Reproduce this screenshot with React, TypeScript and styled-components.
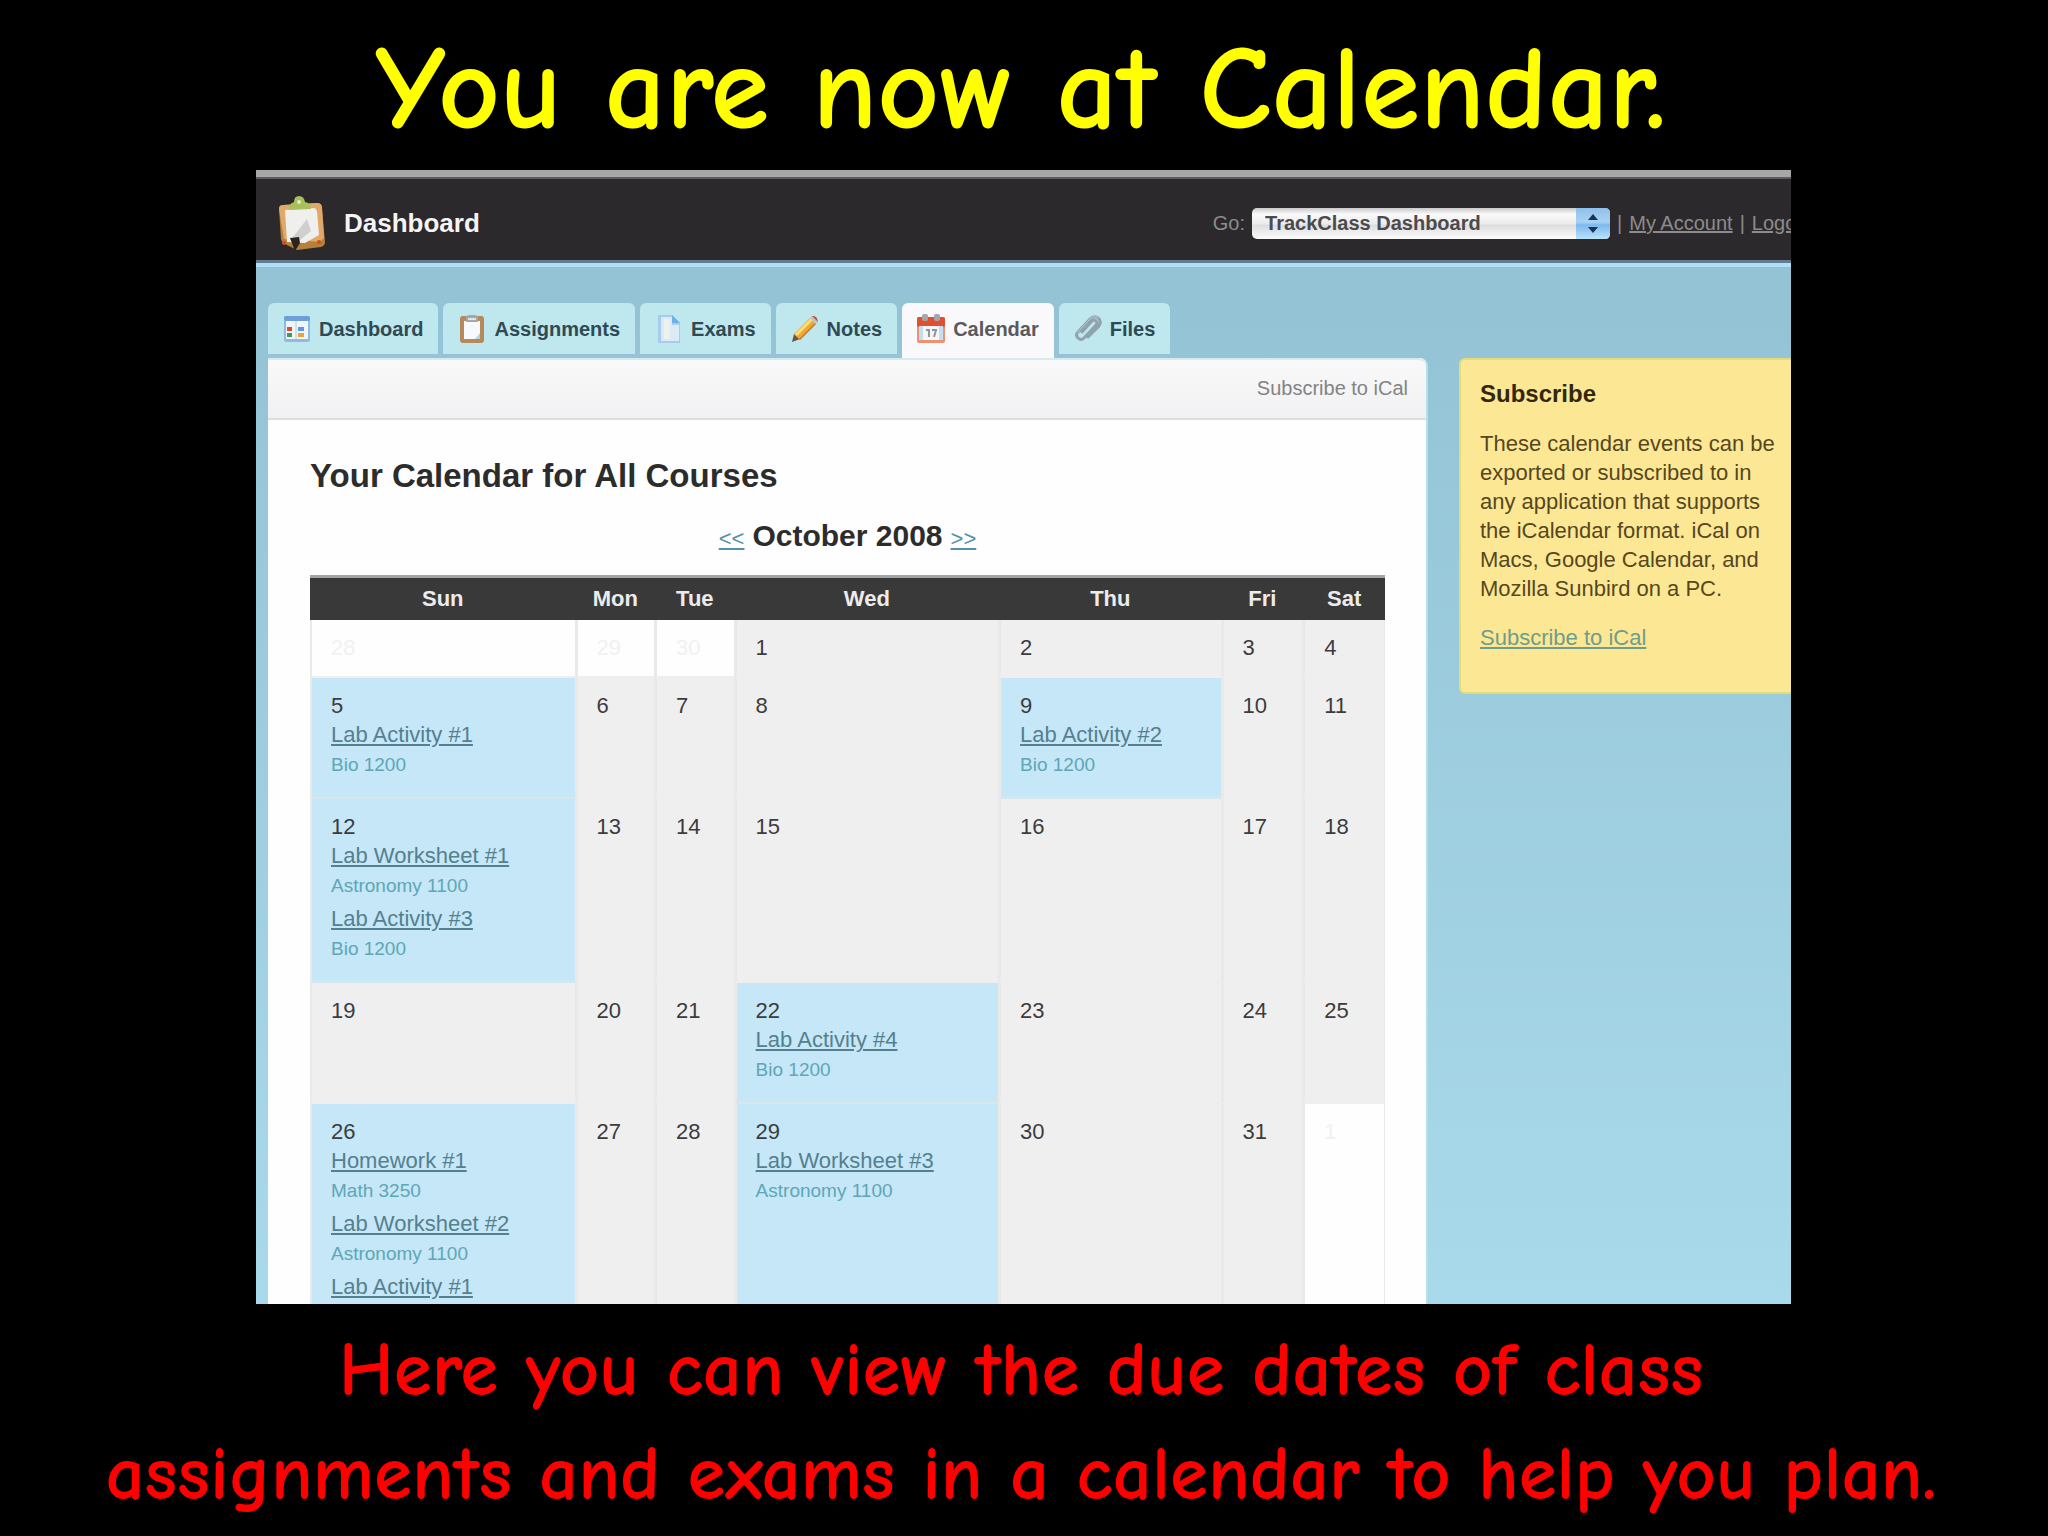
import React from "react";
import styled, { createGlobalStyle, css } from "styled-components";

const sans = `"Liberation Sans", Arial, Helvetica, sans-serif`;
const comic = `"Comic Sans MS", "Comic Neue", "Noto Sans", sans-serif`;

const GlobalStyle = createGlobalStyle`
  * { box-sizing: border-box; }
  body { margin: 0; background: #000; font-family: ${sans}; }
`;

const Slide = styled.main`
  display: flex;
  flex-direction: column;
  height: 100vh;
  background: #000;
`;

const SlideTitle = styled.h1`
  flex: none;
  height: 170px;
  margin: 0;
  padding: 4px 6px 0 0;
  text-align: center;
  color: #ffff00;
  font: 700 120px/170px ${comic};
  white-space: nowrap;
`;

const Caption = styled.p`
  flex: none;
  height: 232px;
  margin: 0;
  padding: 14px 6px 0 0;
  text-align: center;
  color: #ff0000;
  font: 700 77px/104px ${comic};
  white-space: nowrap;
`;

const CaptionLine = styled.span`
  display: block;
`;

const Shot = styled.section`
  flex: 1;
  min-height: 0;
  margin: 0 257px 0 256px;
  overflow: hidden;
  display: flex;
  flex-direction: column;
  background: linear-gradient(#93c3d5 12%, #a9daeb 100%);
`;

const TopBar = styled.header`
  flex: none;
  display: flex;
  align-items: center;
  height: 97px;
  padding: 6px 0 0 20px;
  background: #2b292b;
  border-top: 7px solid #a8a6a8;
  border-bottom: 4px solid #b0dff6;
  box-shadow: inset 0 2px #5c5a5c, inset 0 -3px #627d92;
`;

const Brand = styled.h2`
  flex: 1;
  display: flex;
  align-items: center;
  gap: 18px;
  margin: 0;
  color: #f4f4f4;
  font: 700 26px/32px ${sans};
`;

const Account = styled.nav`
  display: flex;
  align-items: center;
  gap: 7px;
  margin-right: -22px;
  color: #8d8b8d;
  font-size: 20px;
  line-height: 32px;
`;

const AccountLink = styled.a`
  color: inherit;
  text-decoration: underline;
`;

const SelectBox = styled.span`
  position: relative;
  display: block;
  width: 358px;
`;

const CourseSelect = styled.select`
  appearance: none;
  display: block;
  width: 100%;
  height: 31px;
  padding: 0 40px 0 13px;
  border: 0;
  border-radius: 5px;
  color: #4c4a4c;
  background: linear-gradient(#c9c9cb, #fafafa 20%, #ececec 50%, #dedee0 56%, #fcfcfc 100%);
  font: 700 20px/31px ${sans};
`;

const SelectCap = styled.svg`
  position: absolute;
  top: 0;
  right: 0;
  pointer-events: none;
`;

const Tabs = styled.nav`
  flex: none;
  display: flex;
  gap: 5px;
  height: 91px;
  padding: 36px 12px 0;
`;

const Tab = styled.a<{ $active?: boolean }>`
  display: flex;
  align-items: center;
  gap: 8px;
  height: 51px;
  padding: 0 15px;
  border-radius: 6px 6px 0 0;
  background: #bfe7ee;
  color: #2f4a52;
  font: 700 20px/24px ${sans};
  text-decoration: none;
  ${(p) =>
    p.$active &&
    css`
      height: 55px;
      padding-bottom: 4px;
      background: #f9f8fa;
      color: #5a5a5e;
    `}
`;

const Columns = styled.div`
  flex: 1;
  min-height: 0;
  display: flex;
  align-items: flex-start;
  padding-left: 12px;
`;

const Panel = styled.section`
  flex: 1;
  min-width: 0;
  background: #fefefe;
  border-right: 2px solid #b6e0e8;
  border-radius: 0 8px 0 0;
`;

const PanelBar = styled.div`
  display: flex;
  justify-content: flex-end;
  height: 62px;
  padding: 13px 18px;
  background: linear-gradient(#f9f9fa, #f1f0f2);
  border-top: 2px solid #d6ebf0;
  border-bottom: 2px solid #dededf;
  border-radius: 0 8px 0 0;
`;

const BarLink = styled.a`
  color: #838385;
  font-size: 20px;
  line-height: 30px;
  text-decoration: none;
`;

const PanelBody = styled.div`
  padding: 36px 41px 0 42px;
`;

const PageHeading = styled.h3`
  margin: 0;
  color: #2c2c2c;
  font: 700 33px/40px ${sans};
`;

const MonthRow = styled.div`
  display: flex;
  justify-content: center;
  align-items: baseline;
  gap: 8px;
  padding: 20px 0 16px;
  line-height: 40px;
`;

const MonthName = styled.h4`
  margin: 0;
  color: #2c2c2c;
  font: 700 30px/40px ${sans};
`;

const MonthLink = styled.a`
  color: #5590a8;
  font-size: 22px;
`;

const Grid = styled.table`
  width: 100%;
  table-layout: fixed;
  border-collapse: separate;
  border-spacing: 0;
  border-top: 3px solid #a4a4a4;
`;

const DayCol = styled.col<{ $share: string }>`
  width: ${(p) => p.$share};
`;

const DayHead = styled.th`
  height: 42px;
  padding: 0;
  background: #3a393a;
  color: #ececec;
  font: 700 22px/42px ${sans};
`;

type Kind = "plain" | "due" | "out";
const fills = { plain: "#f0eff0", due: "#c5e7f7", out: "#fefefe" };

const Day = styled.td<{ $kind: Kind }>`
  padding: 13px 0 14px 19px;
  vertical-align: top;
  background: ${(p) => fills[p.$kind]};
  border-left: 2px solid #e9e9ea;
  border-right: 1px solid #e9e9ea;
  border-bottom: 2px solid ${(p) => (p.$kind === "due" ? "#d9e6ec" : "#efeeef")};
  color: ${(p) => (p.$kind === "out" ? "#f1f1f1" : "#3c3c3e")};
`;

const DayNumber = styled.div`
  font-size: 22px;
  line-height: 29px;
`;

const Due = styled.div`
  margin-bottom: 3px;
`;

const DueLink = styled.a`
  display: block;
  color: #54808f;
  font-size: 22px;
  line-height: 30px;
  text-decoration: underline;
  white-space: nowrap;
`;

const Course = styled.div`
  color: #5fa6b6;
  font-size: 19px;
  line-height: 30px;
`;

const Note = styled.aside`
  flex: 0 0 350px;
  margin: 0 -18px 0 31px;
  height: 336px;
  padding: 19px 19px 0;
  background: #fce794;
  border: 2px solid #e2dc7c;
  border-radius: 6px;
  color: #56471f;
  font-size: 22px;
  line-height: 29px;
`;

const NoteHeading = styled.h3`
  margin: 0 0 20px;
  color: #33260f;
  font: 700 24px/30px ${sans};
`;

const NoteText = styled.p`
  margin: 0 0 20px;
`;

const NoteLink = styled.a`
  color: #6f9d8c;
  text-decoration: underline;
`;

const LogoIcon = () => (
  <svg width="50" height="56" viewBox="0 0 50 56" aria-hidden="true">
    <path d="M3 14q0-4 4-4l34-2q5 0 5 5l3 34q0 4-4 5l-24 3-12-6q-3-1-4-5z" fill="#b5813a" />
    <path d="M3 14q0-4 4-4l34-2q5 0 5 5l2 30-4 4L8 44z" fill="#e0a96a" />
    <path d="M9 15l29-2q2 0 3 3l2 24-14 8-18-1z" fill="#efefee" />
    <path d="M31 24l-14 18 6 4 12-10z" fill="#cfcfcf" />
    <path d="M13 15q-1-6 5-8 0-6 5-6t6 6q6 1 6 7z" fill="#a9bf5c" />
    <circle cx="23" cy="7" r="2" fill="#e3ecc0" />
    <path d="M14 43l9-1 1 6-5 8z" fill="#2a241c" />
    <circle cx="8" cy="48" r="2" fill="#d44a2c" />
    <circle cx="43" cy="47" r="2" fill="#d44a2c" />
  </svg>
);

const DashboardIcon = () => (
  <svg width="28" height="28" viewBox="0 0 28 28" aria-hidden="true">
    <rect x="1" y="1" width="26" height="26" rx="2" fill="#8fbbe3" />
    <rect x="1" y="1" width="26" height="5" rx="2" fill="#6e9fd8" />
    <rect x="3" y="6" width="22" height="18" fill="#f0f5f8" />
    <path d="M13 6v18" stroke="#b7c9d8" />
    <rect x="4" y="12" width="5" height="4" fill="#dd4a34" />
    <rect x="4" y="18" width="5" height="4" fill="#3f9a52" />
    <rect x="15" y="12" width="6" height="4" fill="#5b98dc" />
    <rect x="15" y="18" width="6" height="4" fill="#eba13c" />
  </svg>
);

const AssignmentsIcon = () => (
  <svg width="28" height="30" viewBox="0 0 28 30" aria-hidden="true">
    <rect x="2" y="2" width="24" height="27" rx="3" fill="#b5895a" />
    <rect x="6" y="7" width="16" height="18" fill="#f6fafc" />
    <path d="M17 25l5-6v6z" fill="#b5d3e6" />
    <path d="M8 8V4q0-3 3-3h6q3 0 3 3v4z" fill="#a3a8aa" />
    <path d="M10 5h8" stroke="#dfe3e4" strokeWidth="2" />
  </svg>
);

const ExamsIcon = () => (
  <svg width="28" height="30" viewBox="0 0 28 30" aria-hidden="true">
    <path d="M3 1h14l8 8v20H3z" fill="#a6cdf0" />
    <path d="M6 3h11v8h7v16H6z" fill="#dbeaf5" />
    <path d="M9 5h6v20H9z" fill="#edf3ec" />
    <path d="M17 1l8 8h-8z" fill="#6faee6" />
  </svg>
);

const NotesIcon = () => (
  <svg width="28" height="28" viewBox="0 0 28 28" aria-hidden="true">
    <path d="M1 27l2-8 6 5z" fill="#6c5343" />
    <path d="M3 19L19 3l6 6L9 25z" fill="#f2a933" />
    <path d="M4 19L20 3l2 2L6 21z" fill="#fbe07a" />
    <path d="M8 24L24 8l1 1L9 25z" fill="#c67a26" />
    <path d="M19 3l2-2 6 6-2 2z" fill="#bfc4c6" />
    <path d="M21 1q5-1 6 6z" fill="#c9453b" />
  </svg>
);

const CalendarIcon = () => (
  <svg width="28" height="30" viewBox="0 0 28 30" aria-hidden="true">
    <rect x="0" y="3" width="28" height="26" rx="2" fill="#ef9072" />
    <rect x="0" y="3" width="28" height="10" rx="2" fill="#df5031" />
    <rect x="2" y="12" width="24" height="14" fill="#f3f7fa" />
    <path d="M2 12h4v14H2zM22 12h4v14h-4z" fill="#c3e0f2" />
    <path d="M9 16h3v7M15 16h4l-2 7" stroke="#8f959a" strokeWidth="2" fill="none" />
    <rect x="5" y="0" width="6" height="7" rx="2" fill="#a3a7aa" />
    <rect x="17" y="0" width="6" height="7" rx="2" fill="#a3a7aa" />
  </svg>
);

const FilesIcon = () => (
  <svg width="28" height="28" viewBox="0 0 28 28" fill="none" strokeLinecap="round" aria-hidden="true">
    <path
      d="M8 17L18 6q2-2 4 0t0 4L10 23q-3 3-6 0t0-6L16 4q4-4 8-1t1 8L14 22"
      stroke="#8fa3ac"
      strokeWidth="3"
    />
    <path d="M4 17L16 4q4-4 8-1" stroke="#bcc9cf" strokeWidth="1" />
  </svg>
);

const tabs = [
  { label: "Dashboard", Icon: DashboardIcon },
  { label: "Assignments", Icon: AssignmentsIcon },
  { label: "Exams", Icon: ExamsIcon },
  { label: "Notes", Icon: NotesIcon },
  { label: "Calendar", Icon: CalendarIcon, active: true },
  { label: "Files", Icon: FilesIcon },
];

const days = [
  { name: "Sun", share: "24.7%" },
  { name: "Mon", share: "7.4%" },
  { name: "Tue", share: "7.4%" },
  { name: "Wed", share: "24.6%" },
  { name: "Thu", share: "20.7%" },
  { name: "Fri", share: "7.6%" },
  { name: "Sat", share: "7.6%" },
];

const weeks: number[][] = [
  [28, 29, 30, 1, 2, 3, 4],
  [5, 6, 7, 8, 9, 10, 11],
  [12, 13, 14, 15, 16, 17, 18],
  [19, 20, 21, 22, 23, 24, 25],
  [26, 27, 28, 29, 30, 31, 1],
];

const due: Record<number, [string, string?][]> = {
  5: [["Lab Activity #1", "Bio 1200"]],
  9: [["Lab Activity #2", "Bio 1200"]],
  12: [
    ["Lab Worksheet #1", "Astronomy 1100"],
    ["Lab Activity #3", "Bio 1200"],
  ],
  22: [["Lab Activity #4", "Bio 1200"]],
  26: [
    ["Homework #1", "Math 3250"],
    ["Lab Worksheet #2", "Astronomy 1100"],
    ["Lab Activity #1"],
  ],
  29: [["Lab Worksheet #3", "Astronomy 1100"]],
};

const isOutside = (week: number, day: number) =>
  (week === 0 && day > 20) || (week === 4 && day < 10);

export default function App() {
  return (
    <Slide>
      <GlobalStyle />
      <SlideTitle>You are now at Calendar.</SlideTitle>
      <Shot>
        <TopBar>
          <Brand>
            <LogoIcon />
            Dashboard
          </Brand>
          <Account>
            <label htmlFor="go">Go:</label>
            <SelectBox>
              <CourseSelect id="go">
                <option>TrackClass Dashboard</option>
              </CourseSelect>
              <SelectCap width="34" height="31" viewBox="0 0 34 31" aria-hidden="true">
                <defs>
                  <linearGradient id="cap" x1="0" y1="0" x2="0" y2="1">
                    <stop offset="0" stopColor="#8fc0ea" />
                    <stop offset="0.45" stopColor="#a9d3f3" />
                    <stop offset="0.55" stopColor="#7db8ee" />
                    <stop offset="1" stopColor="#b9e4fb" />
                  </linearGradient>
                </defs>
                <path d="M0 0h29q5 0 5 5v21q0 5-5 5H0z" fill="url(#cap)" />
                <path d="M17 6l5 6H12zM17 25l5-6H12z" fill="#1d3450" />
              </SelectCap>
            </SelectBox>
            <span>|</span>
            <AccountLink href="#account">My Account</AccountLink>
            <span>|</span>
            <AccountLink href="#logout">Logout</AccountLink>
          </Account>
        </TopBar>
        <Tabs>
          {tabs.map(({ label, Icon, active }) => (
            <Tab key={label} href={`#${label.toLowerCase()}`} $active={active}>
              <Icon />
              {label}
            </Tab>
          ))}
        </Tabs>
        <Columns>
          <Panel>
            <PanelBar>
              <BarLink href="#ical">Subscribe to iCal</BarLink>
            </PanelBar>
            <PanelBody>
              <PageHeading>Your Calendar for All Courses</PageHeading>
              <MonthRow>
                <MonthLink href="#previous">&lt;&lt;</MonthLink>
                <MonthName>October 2008</MonthName>
                <MonthLink href="#next">&gt;&gt;</MonthLink>
              </MonthRow>
              <Grid>
                <colgroup>
                  {days.map((d) => (
                    <DayCol key={d.name} $share={d.share} />
                  ))}
                </colgroup>
                <thead>
                  <tr>
                    {days.map((d) => (
                      <DayHead key={d.name} scope="col">
                        {d.name}
                      </DayHead>
                    ))}
                  </tr>
                </thead>
                <tbody>
                  {weeks.map((week, w) => (
                    <tr key={w}>
                      {week.map((day) => {
                        const outside = isOutside(w, day);
                        const items = outside ? [] : due[day] ?? [];
                        return (
                          <Day key={day} $kind={outside ? "out" : items.length ? "due" : "plain"}>
                            <DayNumber>{day}</DayNumber>
                            {items.map(([title, course]) => (
                              <Due key={title}>
                                <DueLink href="#item">{title}</DueLink>
                                {course && <Course>{course}</Course>}
                              </Due>
                            ))}
                          </Day>
                        );
                      })}
                    </tr>
                  ))}
                </tbody>
              </Grid>
            </PanelBody>
          </Panel>
          <Note>
            <NoteHeading>Subscribe</NoteHeading>
            <NoteText>
              These calendar events can be exported or subscribed to in any application that
              supports the iCalendar format. iCal on Macs, Google Calendar, and Mozilla Sunbird on
              a PC.
            </NoteText>
            <NoteLink href="#ical">Subscribe to iCal</NoteLink>
          </Note>
        </Columns>
      </Shot>
      <Caption>
        <CaptionLine>Here you can view the due dates of class</CaptionLine>
        <CaptionLine>assignments and exams in a calendar to help you plan.</CaptionLine>
      </Caption>
    </Slide>
  );
}
